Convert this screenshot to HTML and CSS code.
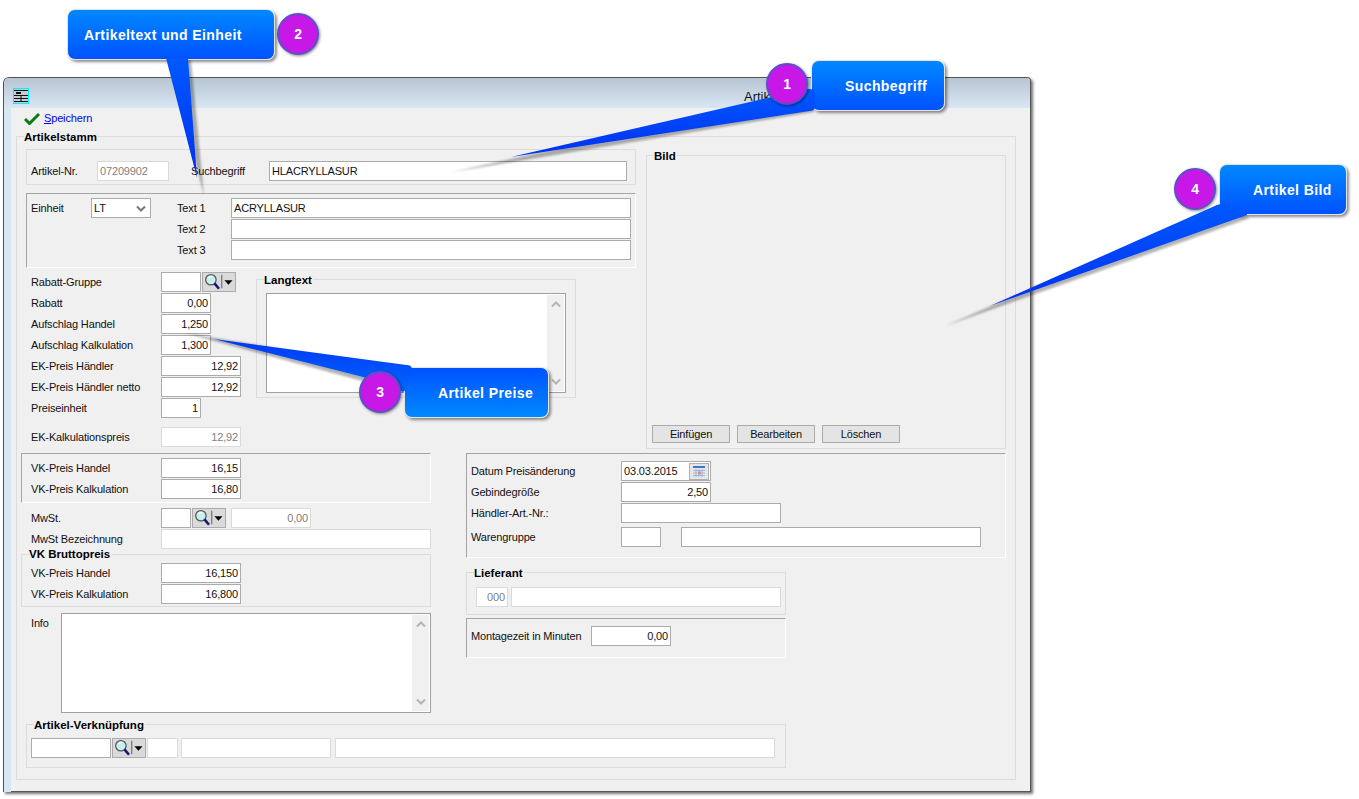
FILE: index.html
```html
<!DOCTYPE html>
<html lang="de">
<head>
  <meta charset="UTF-8">
  <title>Artikelstamm</title>
  <link rel="stylesheet" href="styles.css">
</head>
<body>

  <svg class="defs" width="0" height="0">
    <defs>
      <symbol id="lookup" viewBox="0 0 34 20">
        <circle cx="8" cy="7.5" r="5.8" fill="#c4f0f0" stroke="#555" stroke-width="1.4"/>
        <path d="M5.5 5.5a3.4 3.4 0 0 1 4-1.5" fill="none" stroke="#fff" stroke-width="1.4"/>
        <path d="M12 11.5l5 6" stroke="#14147a" stroke-width="2.8"/>
        <path d="M20 2v15" stroke="#777" stroke-width="1.4"/>
        <path d="M23 8h9l-4.5 5z" fill="#000"/>
      </symbol>
      <symbol id="chev-up" viewBox="0 0 10 7">
        <path d="M1 5.5l4-4 4 4" fill="none" stroke="#b4b4b4" stroke-width="2"/>
      </symbol>
      <symbol id="chev-down" viewBox="0 0 10 7">
        <path d="M1 1.5l4 4 4-4" fill="none" stroke="#b4b4b4" stroke-width="2"/>
      </symbol>
      <symbol id="chev-select" viewBox="0 0 10 7">
        <path d="M1 1.5l4 4 4-4" fill="none" stroke="#777" stroke-width="2"/>
      </symbol>
    </defs>
  </svg>

  <div class="window">
    <div class="titlebar">
      <svg class="app-icon" width="16" height="16" viewBox="0 0 16 16">
        <rect width="16" height="16" fill="#00f0ff"/>
        <rect x="1" y="1" width="14" height="14" fill="#c4ccd4"/>
        <path d="M1 2.5h14M1 7.5h14M1 10.5h14M1 13.5h14M8 7v7" stroke="#111" stroke-width="1"/>
        <path d="M3 5h5" stroke="#111" stroke-width="2"/>
      </svg>
      <span class="title-text">Artikelstamm</span>
    </div>

    <div class="content">
      <div class="toolbar">
        <svg width="16" height="13" viewBox="0 0 16 13">
          <path d="M1 7l4.5 4.5L15 2" fill="none" stroke="#0b7a14" stroke-width="3"/>
        </svg>
        <a class="link" href="#"><u>S</u>peichern</a>
      </div>

      <div class="box stamm">
        <div class="legend">Artikelstamm</div>

        <div class="top-row">
          <div class="top-left">
            <div class="box search-group">
              <label class="lbl w-66">Artikel-Nr.</label>
              <input class="inp w-72 off" value="07209902">
              <label class="lbl w-78 ml-22">Suchbegriff</label>
              <input class="inp w-358" value="HLACRYLLASUR">
            </div>

            <div class="sunken text-group">
              <div class="unit">
                <label class="lbl w-60">Einheit</label>
                <div class="select">LT
                  <svg width="10" height="7"><use href="#chev-select"/></svg>
                </div>
              </div>
              <div class="text-rows">
                <div class="row"><label class="lbl w-54">Text 1</label><input class="inp w-400" value="ACRYLLASUR"></div>
                <div class="row"><label class="lbl w-54">Text 2</label><input class="inp w-400"></div>
                <div class="row"><label class="lbl w-54">Text 3</label><input class="inp w-400"></div>
              </div>
            </div>

            <div class="price-area">
              <div class="price-rows">
                <div class="row">
                  <label class="lbl w-130">Rabatt-Gruppe</label>
                  <input class="inp w-40">
                  <svg class="lookup"><use href="#lookup"/></svg>
                </div>
                <div class="row"><label class="lbl w-130">Rabatt</label><input class="inp w-50 num" value="0,00"></div>
                <div class="row"><label class="lbl w-130">Aufschlag Handel</label><input class="inp w-50 num" value="1,250"></div>
                <div class="row"><label class="lbl w-130">Aufschlag Kalkulation</label><input class="inp w-50 num" value="1,300"></div>
                <div class="row"><label class="lbl w-130">EK-Preis Händler</label><input class="inp w-80 num" value="12,92"></div>
                <div class="row"><label class="lbl w-130">EK-Preis Händler netto</label><input class="inp w-80 num" value="12,92"></div>
                <div class="row"><label class="lbl w-130">Preiseinheit</label><input class="inp w-40 num" value="1"></div>
                <div class="row calc-row"><label class="lbl w-130">EK-Kalkulationspreis</label><input class="inp w-80 num off" value="12,92"></div>
              </div>

              <div class="box langtext">
                <div class="legend">Langtext</div>
                <div class="memo memo-lang">
                  <div class="scroll">
                    <svg width="10" height="7"><use href="#chev-up"/></svg>
                    <svg width="10" height="7"><use href="#chev-down"/></svg>
                  </div>
                </div>
              </div>
            </div>
          </div>

          <div class="box bild">
            <div class="legend">Bild</div>
            <div class="bild-buttons">
              <button class="btn w-78">Einfügen</button>
              <button class="btn w-78">Bearbeiten</button>
              <button class="btn w-78">Löschen</button>
            </div>
          </div>
        </div>

        <div class="mid-row">
          <div class="mid-left">
            <div class="sunken vk-group">
              <div class="row"><label class="lbl w-130">VK-Preis Handel</label><input class="inp w-80 num" value="16,15"></div>
              <div class="row"><label class="lbl w-130">VK-Preis Kalkulation</label><input class="inp w-80 num" value="16,80"></div>
            </div>

            <div class="mwst">
              <div class="row">
                <label class="lbl w-130">MwSt.</label>
                <input class="inp w-30">
                <svg class="lookup"><use href="#lookup"/></svg>
                <input class="inp w-80 num off ml-5" value="0,00">
              </div>
              <div class="row"><label class="lbl w-130">MwSt Bezeichnung</label><input class="inp w-270 off"></div>
            </div>

            <div class="box brutto">
              <div class="legend">VK Bruttopreis</div>
              <div class="row"><label class="lbl w-130">VK-Preis Handel</label><input class="inp w-80 num" value="16,150"></div>
              <div class="row"><label class="lbl w-130">VK-Preis Kalkulation</label><input class="inp w-80 num" value="16,800"></div>
            </div>

            <div class="info">
              <label class="lbl w-30">Info</label>
              <div class="memo memo-info">
                <div class="scroll">
                  <svg width="10" height="7"><use href="#chev-up"/></svg>
                  <svg width="10" height="7"><use href="#chev-down"/></svg>
                </div>
              </div>
            </div>
          </div>

          <div class="mid-right">
            <div class="sunken extra-group">
              <div class="row">
                <label class="lbl w-150">Datum Preisänderung</label>
                <div class="date">03.03.2015
                  <svg class="cal" width="20" height="17" viewBox="0 0 20 17">
                    <rect x=".5" y=".5" width="19" height="16" fill="#e6e6e6" stroke="#b0b0b0"/>
                    <path d="M4 4h12" stroke="#3c78c8" stroke-width="2"/>
                    <path d="M4 7.5h12M4 10h12M4 12.5h12M7 6v8M10 6v8M13 6v8" stroke="#9db8e0"/>
                    <path d="M9 8.5h3v3H9z" fill="#e08a9a"/>
                  </svg>
                </div>
              </div>
              <div class="row"><label class="lbl w-150">Gebindegröße</label><input class="inp w-90 num" value="2,50"></div>
              <div class="row"><label class="lbl w-150">Händler-Art.-Nr.:</label><input class="inp w-160"></div>
              <div class="row waren">
                <label class="lbl w-150">Warengruppe</label>
                <input class="inp w-40">
                <input class="inp w-300 ml-20">
              </div>
            </div>

            <div class="box lieferant">
              <div class="legend">Lieferant</div>
              <div class="row">
                <input class="inp w-32 num off" value="000">
                <input class="inp w-270 off ml-3">
              </div>
            </div>

            <div class="sunken montage">
              <div class="row"><label class="lbl w-120">Montagezeit in Minuten</label><input class="inp w-80 num" value="0,00"></div>
            </div>
          </div>
        </div>

        <div class="box link-group">
          <div class="legend">Artikel-Verknüpfung</div>
          <div class="row">
            <input class="inp w-80">
            <svg class="lookup"><use href="#lookup"/></svg>
            <input class="inp w-31 off ml-1">
            <input class="inp w-150 off ml-3">
            <input class="inp w-440 off ml-4">
          </div>
        </div>
      </div>
    </div>
  </div>

  <!-- callouts on top of the screenshot -->
  <svg class="tails" width="1359" height="799" viewBox="0 0 1359 799">
    <defs>
      <filter id="soft" x="-20%" y="-20%" width="140%" height="140%">
        <feGaussianBlur stdDeviation="1.2"/>
      </filter>
    </defs>
    <g fill="#000" fill-opacity=".3" filter="url(#soft)">
      <polygon points="811,92 452,172 814,112"/>
      <polygon points="169,60 204,196 191,60"/>
      <polygon points="412,370 184,333 366,382"/>
      <polygon points="1219,207 945,326 1250,218"/>
    </g>
  </svg>

  <div class="callout c-1">Suchbegriff</div>
  <div class="callout c-2">Artikeltext und Einheit</div>
  <div class="callout c-3">Artikel Preise</div>
  <div class="callout c-4">Artikel Bild</div>

  <svg class="tails" width="1359" height="799" viewBox="0 0 1359 799">
    <defs>
      <linearGradient id="tail-down" x1="0" y1="0" x2="0" y2="1">
        <stop offset="0" stop-color="#0058ff"/>
        <stop offset="1" stop-color="#0030f0"/>
      </linearGradient>
      <linearGradient id="tail-up" x1="0" y1="0" x2="0" y2="1">
        <stop offset="0" stop-color="#0036f4"/>
        <stop offset="1" stop-color="#0068ff"/>
      </linearGradient>
    </defs>
    <polygon points="808,88.7 511,157 813,110.5 815,108 815,90" fill="url(#tail-down)"/>
    <polygon points="166,58 197,178 188,58" fill="url(#tail-down)"/>
    <polygon points="410,365.5 214,339 363,377 403,392 406,390 412,368" fill="url(#tail-up)"/>
    <polygon points="1217,205 990,306 1247,215 1247,212 1225,203" fill="url(#tail-down)"/>
  </svg>

  <div class="badge b-1">1</div>
  <div class="badge b-2">2</div>
  <div class="badge b-3">3</div>
  <div class="badge b-4">4</div>

</body>
</html>
```

FILE: styles.css
```css
* {
  box-sizing: border-box;
}

body {
  margin: 0;
  height: 799px;
  overflow: hidden;
  position: relative;
  background: #fff;
  font-family: "Liberation Sans", Arial, sans-serif;
  font-size: 11px;
  letter-spacing: -.15px;
  color: #111;
}

.defs {
  position: absolute;
}

/* window */
.window {
  width: 1028px;
  height: 715px;
  margin: 77px 0 0 3px;
  border: 1px solid #555;
  border-width: 1px 1px 0 1px;
  border-radius: 6px 4px 0 0;
  background: #d8e6f3;
  box-shadow: 2px 2px 3px rgba(0, 0, 0, .55);
  overflow: hidden;
}

.titlebar {
  height: 30px;
  padding: 10px 0 0 9px;
  display: flex;
  background: linear-gradient(#b7c5d2, #d9e6f3);
}

.app-icon {
  margin-right: 715px;
}

.title-text {
  font-size: 13px;
  margin-top: 1px;
  letter-spacing: 0;
}

.content {
  height: 684px;
  margin-left: 7px;
  padding-left: 5px;
  background: #f0f0f0;
  border-bottom: 1px solid #555;
}

.toolbar {
  height: 22px;
  display: flex;
  align-items: center;
  gap: 4px;
  padding: 0 0 2px 8px;
}

.link {
  color: #0000ee;
  text-decoration: none;
}

/* boxes */
.box {
  border: 1px solid #dcdcdc;
}

.sunken {
  border: 1px solid #fff;
  border-top-color: #a4a4a4;
  border-left-color: #a4a4a4;
}

.legend {
  width: fit-content;
  height: 12px;
  margin: -6px 0 0 7px;
  padding: 0 1px 0 0;
  background: #f0f0f0;
  font-weight: bold;
  font-size: 11.5px;
  line-height: 13px;
  letter-spacing: 0;
  color: #000;
}

.brutto .legend {
  height: 13px;
  margin-top: -7px;
}

.stamm {
  width: 1000px;
  height: 644px;
  margin-top: 6px;
}

.top-row {
  display: flex;
  height: 304px;
  margin-top: 6px;
}

.top-left {
  width: 610px;
  margin-left: 9px;
}

.search-group {
  height: 36px;
  display: flex;
  align-items: center;
  padding: 7px 0 0 4px;
}

.text-group {
  height: 75px;
  margin-top: 8px;
  padding: 4px 0 0 4px;
  display: flex;
}

.unit {
  display: flex;
  align-items: flex-start;
  height: 20px;
  margin-right: 26px;
}

.unit .lbl {
  line-height: 20px;
}

.price-area {
  display: flex;
  margin-top: 4px;
  padding-left: 5px;
}

.price-rows {
  width: 225px;
}

.calc-row {
  margin-top: 9px;
}

.langtext {
  width: 320px;
  height: 119px;
  margin-top: 7px;
}

.bild {
  width: 360px;
  height: 294px;
  margin: 6px 0 0 10px;
  display: flex;
  flex-direction: column;
}

.bild-buttons {
  display: flex;
  gap: 7px;
  margin: auto 0 5px 5px;
}

.mid-row {
  display: flex;
}

.mid-left {
  width: 410px;
  margin-left: 4px;
}

.mid-right {
  width: 540px;
  margin-left: 35px;
}

.vk-group {
  height: 50px;
  padding: 4px 0 0 9px;
}

.mwst {
  margin-top: 5px;
  padding-left: 10px;
}

.brutto {
  height: 53px;
  margin-top: 5px;
}

.brutto .row {
  margin-left: 9px;
}

.legend + .row {
  margin-top: 2px;
}

.info {
  display: flex;
  margin-top: 6px;
  padding-left: 10px;
}

.info .lbl {
  line-height: 20px;
}

.extra-group {
  height: 105px;
  padding: 7px 0 0 4px;
}

.waren {
  margin-top: 4px;
}

.lieferant {
  width: 320px;
  height: 43px;
  margin-top: 14px;
}

.lieferant .row {
  margin: 8px 0 0 9px;
}

.montage {
  width: 320px;
  height: 40px;
  margin-top: 3px;
  padding: 7px 0 0 4px;
}

.link-group {
  width: 760px;
  height: 44px;
  margin: 11px 0 0 9px;
}

.link-group .row {
  margin: 7px 0 0 4px;
}

/* controls */
.row {
  display: flex;
  align-items: center;
  height: 20px;
  margin-bottom: 1px;
}

.lbl {
  flex: none;
  white-space: nowrap;
}

.inp {
  flex: none;
  height: 20px;
  padding: 0 2px;
  border: 1px solid #ababab;
  border-radius: 0;
  outline: none;
  background: #fff;
  font: inherit;
  letter-spacing: inherit;
  color: #111;
}

.num {
  text-align: right;
}

.off {
  border-color: #dadada;
  color: #808080;
}

.select,
.date {
  flex: none;
  height: 20px;
  display: flex;
  align-items: center;
  justify-content: space-between;
  padding: 0 2px;
  border: 1px solid #ababab;
  background: #fff;
}

.select {
  width: 60px;
  padding-right: 4px;
}

.date {
  width: 90px;
  padding-right: 1px;
}

.lookup {
  flex: none;
  width: 34px;
  height: 20px;
  margin-left: 1px;
  border: 1px solid #ababab;
  background: #dadada;
}

.memo {
  display: flex;
  justify-content: flex-end;
  border: 1px solid #a0a0a0;
  background: #fff;
}

.memo-lang {
  width: 300px;
  height: 100px;
  margin: 7px 0 0 9px;
}

.memo-info {
  width: 370px;
  height: 100px;
}

.scroll {
  width: 17px;
  margin: 1px;
  padding: 6px 0;
  display: flex;
  flex-direction: column;
  justify-content: space-between;
  align-items: center;
  background: #f0f0f0;
}

.btn {
  height: 18px;
  padding: 0;
  border: 1px solid #ababab;
  background: #e4e4e4;
  font: inherit;
  letter-spacing: inherit;
  color: #111;
}

/* widths */
.w-30 { width: 30px; }
.w-31 { width: 31px; }
.w-32 { width: 32px; }
.w-40 { width: 40px; }
.w-50 { width: 50px; }
.w-54 { width: 54px; }
.w-60 { width: 60px; }
.w-66 { width: 66px; }
.w-72 { width: 72px; }
.w-78 { width: 78px; }
.w-80 { width: 80px; }
.w-90 { width: 90px; }
.w-120 { width: 120px; }
.w-130 { width: 130px; }
.w-150 { width: 150px; }
.w-160 { width: 160px; }
.w-270 { width: 270px; }
.w-300 { width: 300px; }
.w-358 { width: 358px; }
.w-400 { width: 400px; }
.w-440 { width: 440px; }
.ml-1 { margin-left: 1px; }
.ml-3 { margin-left: 3px; }
.ml-4 { margin-left: 4px; }
.ml-5 { margin-left: 5px; }
.ml-20 { margin-left: 20px; }
.ml-22 { margin-left: 22px; }

/* callouts */
.tails {
  position: absolute;
  left: 0;
  top: 0;
}

.callout {
  position: absolute;
  height: 51px;
  border: 1px solid #e4e4e4;
  border-radius: 8px;
  background: linear-gradient(#0088ff, #0052ff);
  box-shadow: 2px 2px 3px rgba(0, 0, 0, .45);
  color: #fff;
  font-size: 14px;
  font-weight: bold;
  letter-spacing: .4px;
  line-height: 50px;
}

.c-1 {
  left: 811px;
  top: 60px;
  width: 134px;
  padding-left: 33px;
}

.c-2 {
  left: 67px;
  top: 9px;
  width: 208px;
  padding-left: 16px;
}

.c-3 {
  left: 404px;
  top: 367px;
  width: 145px;
  padding-left: 33px;
  background: linear-gradient(#0052ff, #0088ff);
}

.c-4 {
  left: 1219px;
  top: 164px;
  width: 128px;
  padding-left: 33px;
}

.badge {
  position: absolute;
  width: 42px;
  height: 42px;
  border: 2px solid #5a50c8;
  border-radius: 50%;
  background: #c818e8;
  box-shadow: 1px 1px 3px rgba(0, 0, 0, .45);
  color: #fff;
  font-size: 14px;
  font-weight: bold;
  line-height: 38px;
  text-align: center;
}

.b-1 { left: 766px; top: 63px; }
.b-2 { left: 277px; top: 13px; }
.b-3 { left: 359px; top: 371px; }
.b-4 { left: 1174px; top: 168px; }
```
